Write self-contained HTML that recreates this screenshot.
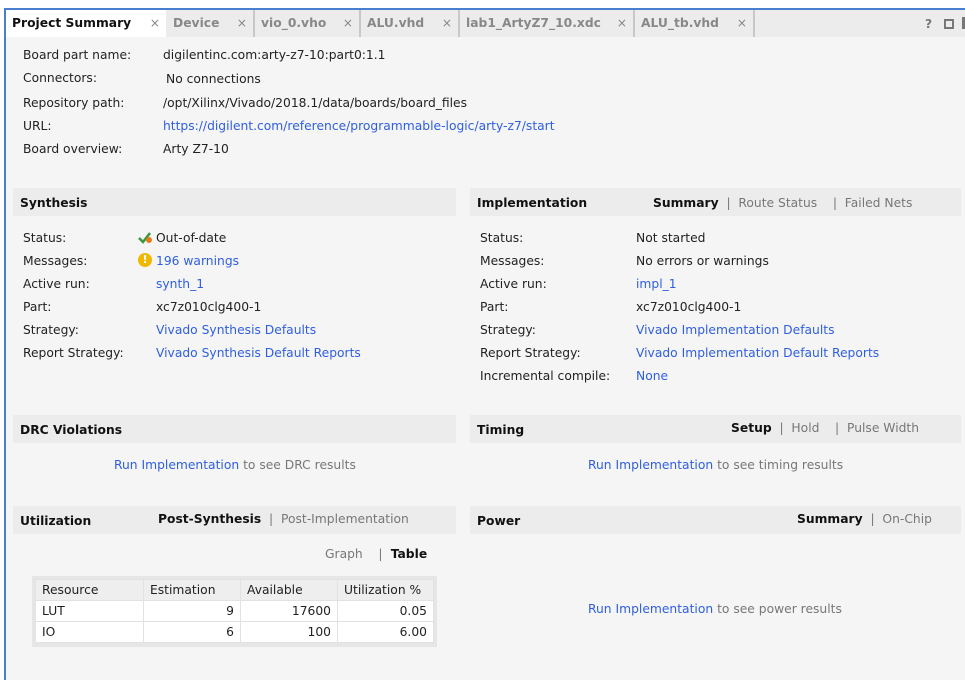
<!DOCTYPE html>
<html><head><style>
*{margin:0;padding:0;box-sizing:border-box}
body{width:965px;height:680px;overflow:hidden;background:#fff;font-family:"DejaVu Sans","Liberation Sans",sans-serif;font-size:12.3px;color:#222;position:relative}
.a{position:absolute;white-space:nowrap;line-height:16px}
.l{color:#2f5fe0}
.g{color:#777}
.b{font-weight:bold;color:#111}
.hd{position:absolute;background:#ececec;height:28px}
.tab{position:absolute;top:10px;height:27px;line-height:27px;font-weight:bold;color:#888;font-size:12.3px;padding-left:6px;border-right:2px solid #c8c8c8}
.tab .x{position:absolute;right:6px;top:0;font-weight:normal;color:#888}
td{border:1px solid #e2e2e2;height:21px;padding:0 6px;background:#fff}
</style></head><body>
<div style="position:absolute;left:4px;top:8px;width:961px;height:672px;background:#f5f5f5;border-left:2px solid #4a7fd0;border-top:2px solid #4a7fd0"></div>
<div style="position:absolute;left:6px;top:10px;width:959px;height:27px;background:#ececec"></div>
<div class="tab" style="left:6px;width:160px;background:#fff;color:#111;border-right:none">Project Summary<span class="x">×</span></div>
<div class="tab" style="left:167px;width:88px">Device<span class="x">×</span></div>
<div class="tab" style="left:255px;width:106px">vio_0.vho<span class="x">×</span></div>
<div class="tab" style="left:361px;width:99px">ALU.vhd<span class="x">×</span></div>
<div class="tab" style="left:460px;width:175px">lab1_ArtyZ7_10.xdc<span class="x">×</span></div>
<div class="tab" style="left:635px;width:120px">ALU_tb.vhd<span class="x">×</span></div>
<div class="a" style="left:925px;top:16px;color:#777;font-weight:bold">?</div>
<div style="position:absolute;left:944px;top:19px;width:10px;height:10px;border:2px solid #777"></div>
<div style="position:absolute;left:962px;top:17px;width:3px;height:12px;background:#777"></div>

<div class="a" style="left:23px;top:47px">Board part name:</div><div class="a" style="left:163px;top:47px">digilentinc.com:arty-z7-10:part0:1.1</div>
<div class="a" style="left:23px;top:70px">Connectors:</div><div class="a" style="left:166px;top:71px">No connections</div>
<div class="a" style="left:23px;top:95px">Repository path:</div><div class="a" style="left:163px;top:95px">/opt/Xilinx/Vivado/2018.1/data/boards/board_files</div>
<div class="a" style="left:23px;top:118px">URL:</div><div class="a l" style="left:163px;top:118px">https://digilent.com/reference/programmable-logic/arty-z7/start</div>
<div class="a" style="left:23px;top:141px">Board overview:</div><div class="a" style="left:163px;top:141px">Arty Z7-10</div>

<div class="hd" style="left:13px;top:188px;width:443px"></div>
<div class="a b" style="left:20px;top:195px">Synthesis</div>
<div class="hd" style="left:470px;top:188px;width:491px"></div>
<div class="a b" style="left:477px;top:195px">Implementation</div>
<div class="a" style="left:653px;top:195px"><span class="b">Summary</span> <span class="g">&nbsp;|&nbsp; Route Status &nbsp;&nbsp; | &nbsp;Failed Nets</span></div>

<div class="a" style="left:23px;top:230px">Status:</div>
<svg style="position:absolute;left:138px;top:231px" width="15" height="14"><path d="M1 7 L5 11 L12 2" stroke="#3a9a3a" stroke-width="2.5" fill="none"/><circle cx="11" cy="9" r="3" fill="#e87a1a"/></svg>
<div class="a" style="left:156px;top:230px">Out-of-date</div>
<div class="a" style="left:23px;top:253px">Messages:</div>
<div style="position:absolute;left:138px;top:253px;width:14px;height:14px;border-radius:50%;background:#f0b800;color:#fff;font-weight:bold;font-size:11px;line-height:14px;text-align:center">!</div>
<div class="a l" style="left:156px;top:253px">196 warnings</div>
<div class="a" style="left:23px;top:276px">Active run:</div><div class="a l" style="left:156px;top:276px">synth_1</div>
<div class="a" style="left:23px;top:299px">Part:</div><div class="a" style="left:156px;top:299px">xc7z010clg400-1</div>
<div class="a" style="left:23px;top:322px">Strategy:</div><div class="a l" style="left:156px;top:322px">Vivado Synthesis Defaults</div>
<div class="a" style="left:23px;top:345px">Report Strategy:</div><div class="a l" style="left:156px;top:345px">Vivado Synthesis Default Reports</div>

<div class="a" style="left:480px;top:230px">Status:</div><div class="a" style="left:636px;top:230px">Not started</div>
<div class="a" style="left:480px;top:253px">Messages:</div><div class="a" style="left:636px;top:253px">No errors or warnings</div>
<div class="a" style="left:480px;top:276px">Active run:</div><div class="a l" style="left:636px;top:276px">impl_1</div>
<div class="a" style="left:480px;top:299px">Part:</div><div class="a" style="left:636px;top:299px">xc7z010clg400-1</div>
<div class="a" style="left:480px;top:322px">Strategy:</div><div class="a l" style="left:636px;top:322px">Vivado Implementation Defaults</div>
<div class="a" style="left:480px;top:345px">Report Strategy:</div><div class="a l" style="left:636px;top:345px">Vivado Implementation Default Reports</div>
<div class="a" style="left:480px;top:368px">Incremental compile:</div><div class="a l" style="left:636px;top:368px">None</div>

<div class="hd" style="left:13px;top:415px;width:443px"></div>
<div class="a b" style="left:20px;top:422px">DRC Violations</div>
<div class="a" style="left:114px;top:457px"><span class="l">Run Implementation</span> <span class="g">to see DRC results</span></div>
<div class="hd" style="left:470px;top:415px;width:491px"></div>
<div class="a b" style="left:477px;top:422px">Timing</div>
<div class="a" style="left:731px;top:420px"><span class="b">Setup</span> <span class="g">&nbsp;| &nbsp;Hold &nbsp;&nbsp; | &nbsp;Pulse Width</span></div>
<div class="a" style="left:588px;top:457px"><span class="l">Run Implementation</span> <span class="g">to see timing results</span></div>

<div class="hd" style="left:13px;top:506px;width:443px"></div>
<div class="a b" style="left:20px;top:513px">Utilization</div>
<div class="a" style="left:158px;top:511px"><span class="b">Post-Synthesis</span> <span class="g">&nbsp;| &nbsp;Post-Implementation</span></div>
<div class="hd" style="left:470px;top:506px;width:491px"></div>
<div class="a b" style="left:477px;top:513px">Power</div>
<div class="a" style="left:797px;top:511px"><span class="b">Summary</span> <span class="g">&nbsp;| &nbsp;On-Chip</span></div>
<div class="a" style="left:325px;top:546px"><span class="g">Graph &nbsp;&nbsp; | </span><span class="b">&nbsp;Table</span></div>
<div class="a" style="left:588px;top:601px"><span class="l">Run Implementation</span> <span class="g">to see power results</span></div>

<div style="position:absolute;left:32px;top:576px;width:405px;height:71px;background:#e6e6e6;padding:3px">
<table style="border-collapse:collapse;width:399px;font-size:12.3px">
<tr><td style="background:#eeeeee;width:108px">Resource</td><td style="background:#eeeeee;width:97px">Estimation</td><td style="background:#eeeeee;width:97px">Available</td><td style="background:#eeeeee">Utilization %</td></tr>
<tr><td>LUT</td><td style="text-align:right">9</td><td style="text-align:right">17600</td><td style="text-align:right">0.05</td></tr>
<tr><td>IO</td><td style="text-align:right">6</td><td style="text-align:right">100</td><td style="text-align:right">6.00</td></tr>
</table></div>
</body></html>
